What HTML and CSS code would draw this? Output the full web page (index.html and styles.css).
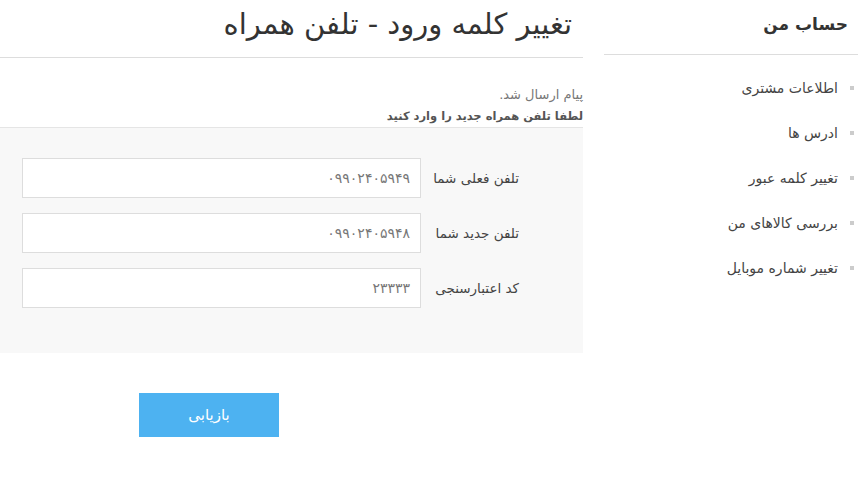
FILE: index.html
```html
<!DOCTYPE html>
<html lang="fa" dir="rtl">
<head>
<meta charset="utf-8">
<link rel="stylesheet" href="styles.css">
</head>
<body>
<div class="page">
  <aside class="sidebar">
    <h2 class="side-title">حساب من</h2>
    <ul class="side-list">
      <li>اطلاعات مشتری</li>
      <li>ادرس ها</li>
      <li>تغییر کلمه عبور</li>
      <li>بررسی کالاهای من</li>
      <li>تغییر شماره موبایل</li>
    </ul>
  </aside>
  <main class="main">
    <h1 class="title">تغییر کلمه ورود - تلفن همراه</h1>
    <div class="messages">
      <p class="msg">پیام ارسال شد.</p>
      <p class="msg-strong">لطفا تلفن همراه جدید را وارد کنید</p>
    </div>
    <div class="panel">
      <div class="row">
        <label class="label">تلفن فعلی شما</label>
        <div class="input">۰۹۹۰۲۴۰۵۹۴۹</div>
      </div>
      <div class="row">
        <label class="label">تلفن جدید شما</label>
        <div class="input">۰۹۹۰۲۴۰۵۹۴۸</div>
      </div>
      <div class="row">
        <label class="label">کد اعتبارسنجی</label>
        <div class="input">۲۳۳۳۳</div>
      </div>
    </div>
    <div class="actions">
      <button class="btn">بازیابی</button>
    </div>
  </main>
</div>
</body>
</html>
```
FILE: styles.css
```css
* { box-sizing: border-box; }
body {
  margin: 0;
  background: #fff;
  font-family: "DejaVu Sans", "Noto Sans", sans-serif;
  color: #333;
}
.page {
  display: flex;
  flex-direction: row;
  gap: 21px;
  width: 858px;
}
.sidebar {
  width: 254px;
  flex: none;
}
.side-title {
  margin: 0;
  height: 55px;
  padding: 14px 10px 0 0;
  font-size: 17px;
  font-weight: bold;
  color: #333;
  border-bottom: 1px solid #ddd;
}
.side-list {
  list-style: none;
  margin: 0;
  padding: 20px 0 0 0;
}
.side-list li {
  position: relative;
  height: 45px;
  padding-right: 20px;
  font-size: 14px;
  color: #444;
  line-height: 26px;
}
.side-list li::before {
  content: "";
  position: absolute;
  right: 4px;
  top: 11px;
  width: 4px;
  height: 4px;
  background: #ccc;
}
.main {
  width: 583px;
  flex: none;
}
.title {
  margin: 0;
  height: 58px;
  padding: 7px 11px 0 0;
  font-size: 29px;
  font-weight: normal;
  color: #333;
  border-bottom: 1px solid #ddd;
}
.messages {
  padding: 26px 0 1px 0;
}
.msg {
  margin: 0;
  font-size: 13px;
  color: #777;
  line-height: 22px;
}
.msg-strong {
  margin: 0;
  font-size: 11.5px;
  font-weight: bold;
  color: #555;
  line-height: 20px;
}
.panel {
  background: #f8f8f8;
  border-top: 1px solid #e5e5e5;
  padding: 30px 0 45px 22px;
  display: flex;
  flex-direction: column;
  gap: 15px;
}
.row {
  display: flex;
  align-items: center;
  height: 40px;
}
.label {
  width: 162px;
  padding-right: 64px;
  font-size: 13.5px;
  color: #444;
}
.input {
  flex: 1;
  height: 40px;
  background: #fff;
  border: 1px solid #ddd;
  padding: 0 10px;
  line-height: 38px;
  font-size: 14px;
  color: #777;
}
.actions {
  padding: 40px 0 0 139px;
  display: flex;
  justify-content: flex-end;
}
.btn {
  width: 140px;
  height: 44px;
  border: none;
  background: #4db2f1;
  color: #fff;
  font-family: "DejaVu Sans", sans-serif;
  font-size: 15px;
}
```
